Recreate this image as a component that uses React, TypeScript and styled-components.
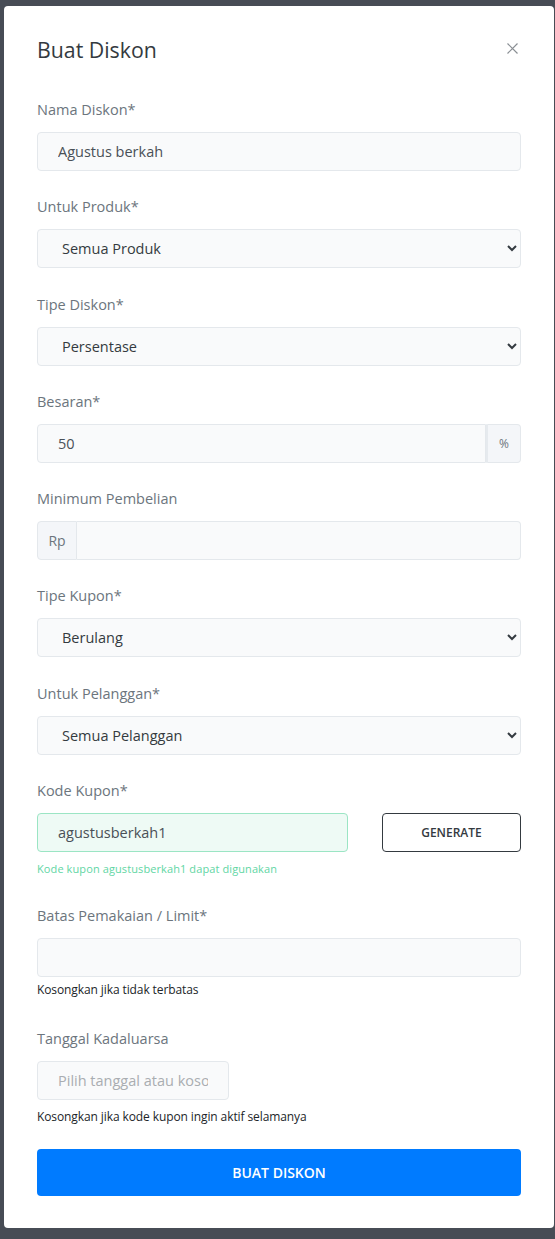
import React from "react";
import styled, { createGlobalStyle } from "styled-components";

const GlobalStyle = createGlobalStyle`
  * { box-sizing: border-box; }
  html, body { margin: 0; padding: 0; }
  body {
    background: #474c55;
    font-family: "Open Sans", "Noto Sans", sans-serif;
    -webkit-font-smoothing: antialiased;
  }
`;

const Backdrop = styled.div`
  min-height: 1239px;
  padding: 6px 1px 11px 4px;
`;

const Modal = styled.div`
  width: 550px;
  background: #ffffff;
  border-radius: 4px;
  padding: 29px 33px 32px;
`;

const Header = styled.div`
  display: flex;
  align-items: center;
  justify-content: space-between;
  height: 30px;
  margin-bottom: 32px;
`;

const Title = styled.h5`
  margin: 0;
  font-size: 21.3px;
  font-weight: 400;
  color: #343a40;
  line-height: 30px;
`;

const CloseButton = styled.button`
  border: 0;
  background: transparent;
  padding: 0;
  width: 12px;
  height: 12px;
  margin-right: 3px;
  margin-top: -4px;
  display: flex;
  align-items: center;
  justify-content: center;
  cursor: pointer;
`;

const Form = styled.form`
  display: flex;
  flex-direction: column;
`;

const Group = styled.div<{ $mb?: number }>`
  display: flex;
  flex-direction: column;
  margin-bottom: ${(p) => (p.$mb ?? 23.3)}px;
`;

const Label = styled.label`
  font-size: 14.5px;
  line-height: 22px;
  color: #6c757d;
  padding-top: 2px;
  margin-bottom: 11px;
`;

const fieldBase = `
  height: 39px;
  border: 1px solid #e4e8ec;
  border-radius: 4px;
  background: #f9fafb;
  font-family: "Open Sans", "Noto Sans", sans-serif;
  font-size: 14.5px;
  color: #495057;
  padding: 0 20px;
  outline: none;
`;

const Input = styled.input<{ $valid?: boolean; $width?: number }>`
  ${fieldBase}
  width: ${(p) => (p.$width ? `${p.$width}px` : "100%")};
  ${(p) =>
    p.$valid
      ? `background: #eefaf5; border-color: #9be5c4;`
      : ""}
  &::placeholder { color: #a9adb1; }
`;

const Select = styled.select`
  ${fieldBase}
  width: 100%;
  padding: 0 14px 0 20px;
  color: #343a40;
`;

const InputGroup = styled.div`
  display: flex;
  width: 100%;
  height: 39px;
`;

const GroupInput = styled.input<{ $side: "left" | "right" }>`
  ${fieldBase}
  flex: 1;
  min-width: 0;
  ${(p) =>
    p.$side === "left"
      ? `border-top-right-radius: 0; border-bottom-right-radius: 0;`
      : `border-top-left-radius: 0; border-bottom-left-radius: 0; border-left: 0;`}
`;

const Addon = styled.span<{ $side: "left" | "right"; $width: number; $size: number }>`
  width: ${(p) => p.$width}px;
  display: flex;
  align-items: center;
  justify-content: center;
  background: #f4f6f9;
  border: 1px solid #e4e8ec;
  color: #6c757d;
  font-size: ${(p) => p.$size}px;
  ${(p) =>
    p.$side === "right"
      ? `border-radius: 0 4px 4px 0; border-left: 2px solid #e6eaee;`
      : `border-radius: 4px 0 0 4px;`}
`;

const CodeRow = styled.div`
  display: grid;
  grid-template-columns: 311px 139px;
  justify-content: space-between;
`;

const GenerateButton = styled.button`
  height: 39px;
  background: #ffffff;
  border: 1px solid #343a40;
  border-radius: 4px;
  font-family: "Open Sans", "Noto Sans", sans-serif;
  font-size: 12px;
  font-weight: 600;
  color: #343a40;
  cursor: pointer;
`;

const Help = styled.small<{ $tone?: "success" | "muted"; $mt: number }>`
  display: block;
  font-size: ${(p) => (p.$tone === "success" ? 11 : 12)}px;
  line-height: 16px;
  margin-top: ${(p) => p.$mt}px;
  color: ${(p) => (p.$tone === "success" ? "#5fd6a4" : "#212529")};
  letter-spacing: ${(p) => (p.$tone === "success" ? "0.1px" : "-0.1px")};
`;

const SubmitButton = styled.button`
  width: 100%;
  height: 47px;
  border: 0;
  border-radius: 4px;
  background: #007bff;
  color: #ffffff;
  font-family: "Open Sans", "Noto Sans", sans-serif;
  font-size: 14px;
  font-weight: 600;
  cursor: pointer;
`;

export default function App() {
  return (
    <>
      <GlobalStyle />
      <Backdrop>
        <Modal>
          <Header>
            <Title>Buat Diskon</Title>
            <CloseButton aria-label="Close">
              <svg width="11" height="11" viewBox="0 0 11 11">
                <path d="M0.5 0.5 L10.5 10.5 M10.5 0.5 L0.5 10.5" stroke="#8a8f94" strokeWidth="1.2" fill="none" />
              </svg>
            </CloseButton>
          </Header>
          <Form onSubmit={(e) => e.preventDefault()}>
            <Group>
              <Label>Nama Diskon*</Label>
              <Input defaultValue="Agustus berkah" />
            </Group>
            <Group>
              <Label>Untuk Produk*</Label>
              <Select defaultValue="semua">
                <option value="semua">Semua Produk</option>
              </Select>
            </Group>
            <Group>
              <Label>Tipe Diskon*</Label>
              <Select defaultValue="persen">
                <option value="persen">Persentase</option>
              </Select>
            </Group>
            <Group>
              <Label>Besaran*</Label>
              <InputGroup>
                <GroupInput $side="left" defaultValue="50" />
                <Addon $side="right" $width={35} $size={12}>%</Addon>
              </InputGroup>
            </Group>
            <Group>
              <Label>Minimum Pembelian</Label>
              <InputGroup>
                <Addon $side="left" $width={40} $size={14}>Rp</Addon>
                <GroupInput $side="right" />
              </InputGroup>
            </Group>
            <Group>
              <Label>Tipe Kupon*</Label>
              <Select defaultValue="berulang">
                <option value="berulang">Berulang</option>
              </Select>
            </Group>
            <Group>
              <Label>Untuk Pelanggan*</Label>
              <Select defaultValue="semua">
                <option value="semua">Semua Pelanggan</option>
              </Select>
            </Group>
            <Group $mb={26}>
              <Label>Kode Kupon*</Label>
              <CodeRow>
                <Input $valid defaultValue="agustusberkah1" />
                <GenerateButton type="button">GENERATE</GenerateButton>
              </CodeRow>
              <Help $tone="success" $mt={9}>Kode kupon agustusberkah1 dapat digunakan</Help>
            </Group>
            <Group $mb={28}>
              <Label>Batas Pemakaian / Limit*</Label>
              <Input />
              <Help $mt={5}>Kosongkan jika tidak terbatas</Help>
            </Group>
            <Group $mb={24}>
              <Label>Tanggal Kadaluarsa</Label>
              <Input $width={192} placeholder="Pilih tanggal atau kosongkan" />
              <Help $mt={9}>Kosongkan jika kode kupon ingin aktif selamanya</Help>
            </Group>
            <SubmitButton type="submit">BUAT DISKON</SubmitButton>
          </Form>
        </Modal>
      </Backdrop>
    </>
  );
}
